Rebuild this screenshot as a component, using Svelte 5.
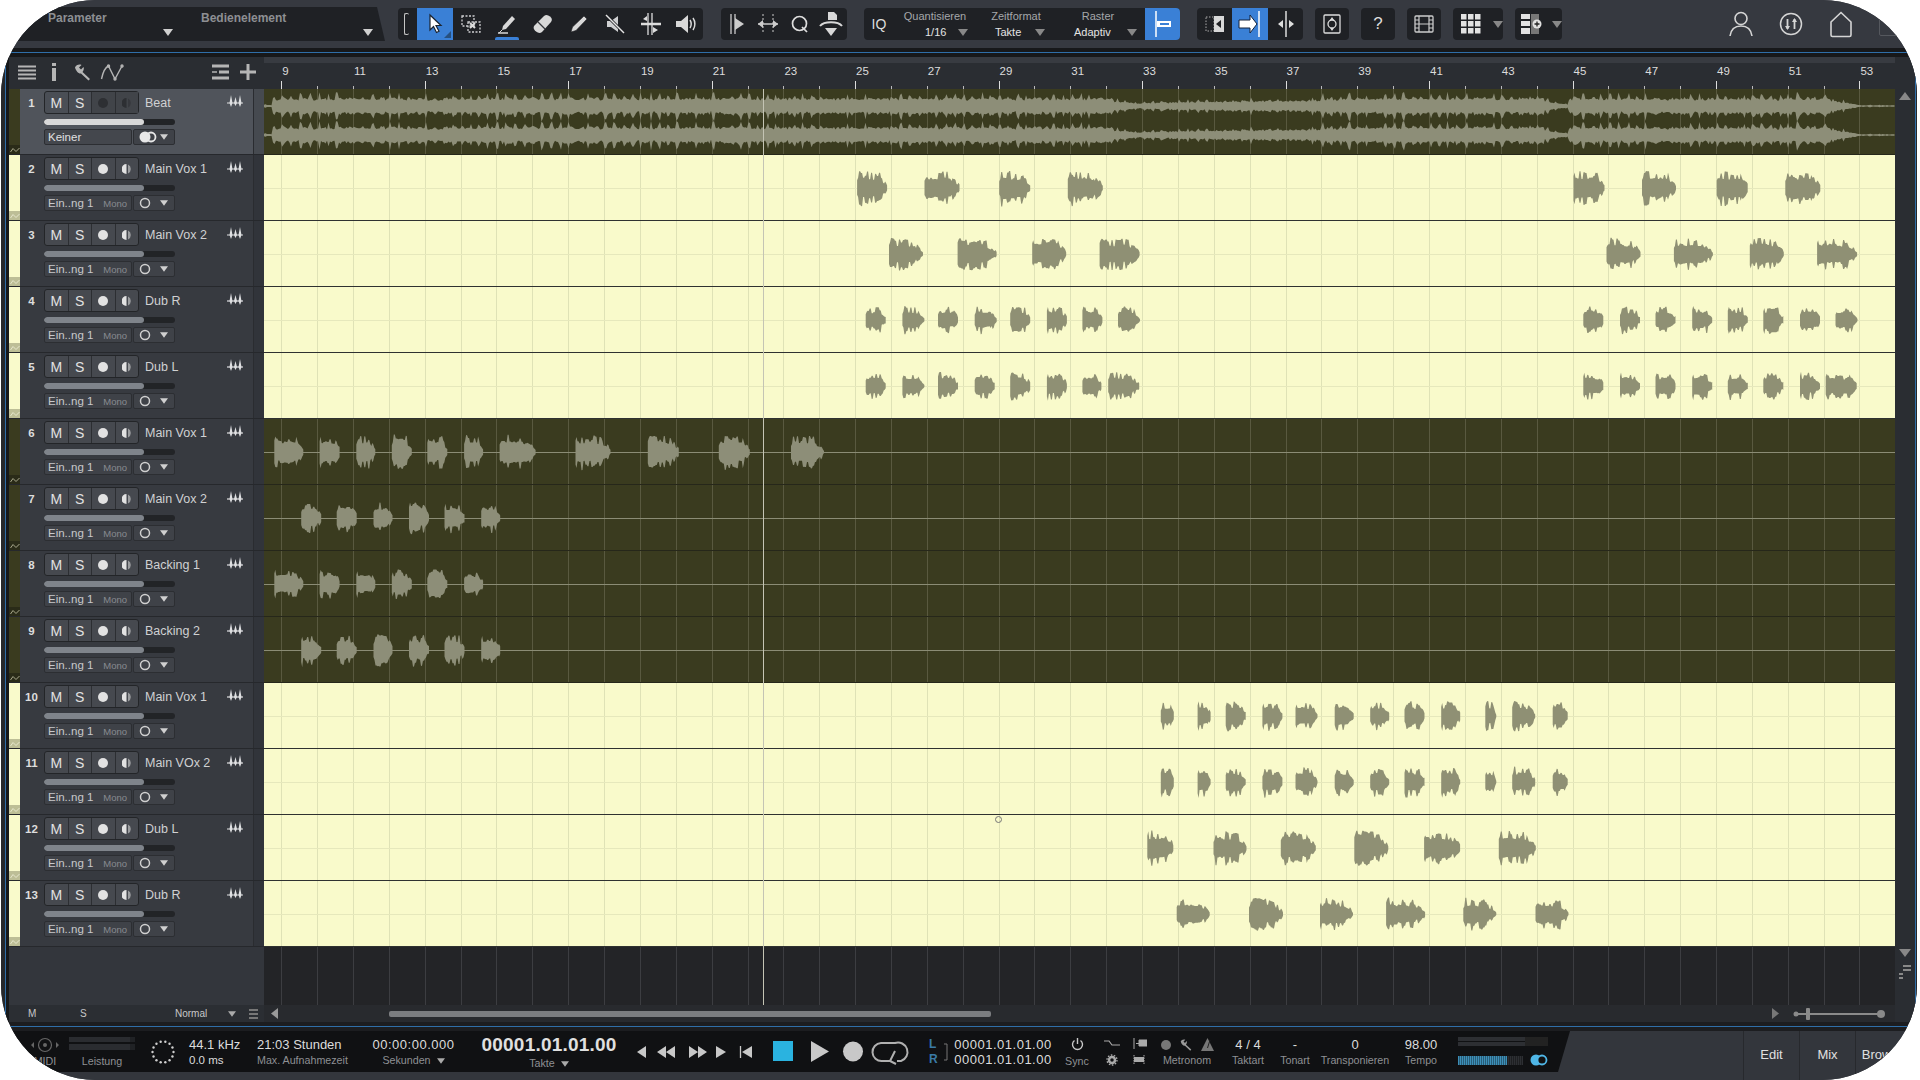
<script>
  // clip positions were measured on the 1568 wide reference
  const K = 1920 / 1568;
  const LANE_X = 264;
  const LANE_W = 1631;

  const barX = (n) => 281.2 + (n - 9) * 35.87;
  const bars = [];
  for (let n = 9; n <= 53; n++) bars.push(n);

  function makeRandom(seed) {
    let s = seed * 9973 + 17;
    return () => {
      s = (s * 16807) % 2147483647;
      return (s % 10000) / 10000;
    };
  }

  // one vocal phrase: fast attack, comb-like body, short tail
  function blob(x0, x1, cy, amp, seed) {
    const r = makeRandom(seed);
    const top = [];
    const bottom = [];
    const len = x1 - x0;
    let upper = 0.7;
    let lower = 0.7;
    for (let x = 0; x <= len; x += 1) {
      const t = x / len;
      let env = 1 - t * 0.15;
      if (t < 0.04) env = 0.7 + t * 7;
      if (t > 0.76) env = 0.62 * Math.pow((1 - t) / 0.24, 0.6) + 0.08;
      if (x % 2 === 0) {
        const tall = r() > 0.5;
        upper = tall ? 0.85 + r() * 0.35 : 0.58 + r() * 0.2;
        lower = tall ? 0.85 + r() * 0.4 : 0.58 + r() * 0.2;
      }
      top.push([x0 + x, cy - amp * env * upper]);
      bottom.push([x0 + x, cy + amp * env * lower]);
    }
    return [...top, ...bottom.reverse()]
      .map((p) => p[0].toFixed(1) + "," + p[1].toFixed(1))
      .join(" ");
  }

  // the Beat track, a long stereo file
  function beatWave(cy, seed) {
    const r = makeRandom(seed);
    const top = [];
    const bottom = [];
    for (let x = 0; x < LANE_W; x += 1.5) {
      const abs = x + LANE_X;
      const bar = 9 + (abs - 281.2) / 35.87;
      let env = 1;
      if (abs < 273) env = 0.14;
      if (bar > 32.2 && bar < 33) env = 0.65 - (bar - 32.2) * 0.4;
      if (bar >= 33 && bar < 37) env = 0.42 + (bar - 33) * 0.08;
      if (bar >= 37 && bar < 38) env = 0.8;
      if (bar > 44.2 && bar < 44.9) env = 0.7 - (bar - 44.2) * 0.8;
      if (bar > 52) env = Math.max(0.1, 1 - (bar - 52) * 0.9);
      const beat = (bar * 4) % 1;
      const pulse = beat < 0.3 ? 1 : 0.2 + (1 - beat) * 0.3;
      const a = env * (5 + pulse * r() * 8 + r() * 1.5);
      top.push([x, cy - a]);
      bottom.push([x, cy + a * (0.9 + r() * 0.25)]);
    }
    return [...top, ...bottom.reverse()]
      .map((p) => p[0].toFixed(1) + "," + p[1].toFixed(1))
      .join(" ");
  }

  const dubA = [[707, 724], [737, 755], [766, 783], [796, 814], [825, 842], [855, 872], [884, 901], [913, 931], [1293, 1310], [1323, 1340], [1352, 1369], [1382, 1399], [1411, 1428], [1440, 1457], [1470, 1487], [1499, 1517]];
  const dubB = [[707, 724], [737, 755], [766, 783], [796, 813], [825, 842], [855, 872], [884, 900], [905, 931], [1293, 1310], [1323, 1340], [1352, 1369], [1382, 1399], [1411, 1428], [1440, 1457], [1470, 1487], [1491, 1517]];
  const backA = [[246, 263], [275, 292], [305, 321], [334, 351], [363, 380], [393, 409]];
  const backB = [[224, 248], [261, 278], [291, 307], [320, 337], [349, 366], [379, 395]];
  const late = [[948, 959], [978, 989], [1001, 1018], [1031, 1048], [1058, 1076], [1090, 1106], [1119, 1135], [1147, 1164], [1177, 1193], [1213, 1222], [1235, 1254], [1268, 1281]];

  const tracks = [
    { name: "Beat", dark: true, clips: [], amp: 0 },
    { name: "Main Vox 1", clips: [[700, 725], [755, 784], [816, 842], [872, 901], [1285, 1311], [1341, 1369], [1402, 1428], [1458, 1487]], amp: 15 },
    { name: "Main Vox 2", clips: [[726, 754], [782, 814], [843, 871], [898, 931], [1312, 1340], [1367, 1399], [1429, 1457], [1484, 1517]], amp: 14 },
    { name: "Dub R", clips: dubA, amp: 12 },
    { name: "Dub L", clips: dubB, amp: 12 },
    { name: "Main Vox 1", dark: true, clips: [[224, 248], [261, 278], [291, 307], [320, 337], [349, 366], [379, 395], [408, 438], [470, 499], [529, 555], [587, 613], [646, 673]], amp: 15 },
    { name: "Main Vox 2", dark: true, clips: backA, amp: 14 },
    { name: "Backing 1", dark: true, clips: backB, amp: 13 },
    { name: "Backing 2", dark: true, clips: backA, amp: 14 },
    { name: "Main Vox 1", clips: late, amp: 13 },
    { name: "Main VOx 2", clips: late, amp: 13 },
    { name: "Dub L", clips: [[937, 959], [991, 1018], [1046, 1075], [1106, 1134], [1163, 1193], [1224, 1255]], amp: 15 },
    { name: "Dub R", clips: [[961, 988], [1020, 1048], [1078, 1105], [1132, 1164], [1195, 1222], [1254, 1281]], amp: 14 }
  ];

  tracks.forEach((t, i) => {
    t.shapes = t.clips.map((c, j) =>
      blob(c[0] * K - LANE_X, c[1] * K - LANE_X, 33, t.amp, (i + 1) * 31 + j * 7 + 3)
    );
  });
  const beatTop = beatWave(17, 11);
  const beatBottom = beatWave(46, 11);

  const spinnerDots = [];
  for (let i = 0; i < 14; i++) {
    const a = (i / 14) * Math.PI * 2;
    spinnerDots.push({ x: 13 + Math.cos(a) * 10.5, y: 13 + Math.sin(a) * 10.5 });
  }
</script>

{#snippet tri(cls = "")}
  <svg class="tri {cls}" width="10" height="7" viewBox="0 0 10 7"><path d="M0 0H10L5 7Z" /></svg>
{/snippet}

{#snippet waves()}
  <svg class="waves" width="18" height="14" viewBox="0 0 18 14">
    <path d="M1 9h16" stroke="#dfe0e2" stroke-width="1.200" fill="none" />
    <path d="M5 1 6.500 9 5 13 3.500 9ZM9.500 3 11 9 9.500 12 8 9ZM14 1 15.500 9 14 13 12.500 9Z" fill="#dfe0e2" />
  </svg>
{/snippet}

{#snippet autoIcon()}
  <svg width="10" height="6" viewBox="0 0 10 6"><path d="M.5 5 3 1.5 6 4.5 9.500 1" stroke="currentColor" fill="none" /></svg>
{/snippet}

<div class="window">
  <header class="topbar">
    <div class="params">
      <div class="param first">Parameter {@render tri()}</div>
      <div class="param second">Bedienelement {@render tri()}</div>
    </div>

    <div class="grp g1">
      <span class="bracket"></span>
      <div class="slot s36 active">
        <svg width="20" height="22" viewBox="0 0 20 22"><path d="M5 2v15l3.500-3.500 3 6 2.500-1.200-3-5.800h5Z" fill="#fff" stroke="#1c2430" stroke-width="1.200" /></svg>
        <i class="corner"></i>
      </div>
      <div class="slot s36">
        <svg width="22" height="20" viewBox="0 0 22 20" fill="none" stroke="#cfd0d2" stroke-width="1.300" stroke-dasharray="2 1.500"><path d="M2 2h12v10H2ZM8 8h12v10H8Z" /><path d="M10 9l5 5M15 9l-5 5" stroke="#ddd" stroke-width="2" stroke-dasharray="none" /></svg>
      </div>
      <div class="slot s36 under">
        <svg width="22" height="22" viewBox="0 0 22 22"><path d="M7 13 16 3l3 3-9 10-4 1Z" fill="#d8d8d8" /><path d="M2 20h10" stroke="#d8d8d8" stroke-width="1.300" /><path d="M6 17 3 20" stroke="#d8d8d8" /></svg>
      </div>
      <div class="slot s36">
        <svg width="22" height="22" viewBox="0 0 22 22"><path d="M2 13 12 3c2-1.500 4-1 6 .5s2.500 3.500 1 5.500L10 19c-2 1.500-4 1-6-.5S1 15 2 13Z" fill="#d8d8d8" /><path d="M6 9l7 7" stroke="#33353a" stroke-width="1.300" /></svg>
      </div>
      <div class="slot s36">
        <svg width="22" height="22" viewBox="0 0 22 22"><path d="M3 19 4.500 14 16 3l3 3L8 17.500Z" fill="#d8d8d8" stroke="#1e1f22" stroke-width=".6" /></svg>
      </div>
      <div class="slot s36">
        <svg width="22" height="22" viewBox="0 0 22 22"><path d="M3 8h4l7-5v16l-7-5H3Z" fill="#cfd0d2" /><path d="M2 2l18 18" stroke="#1e1f22" stroke-width="3" /><path d="M2 2l18 18" stroke="#e5e5e5" stroke-width="1.500" /></svg>
      </div>
      <div class="slot s36">
        <svg width="22" height="24" viewBox="0 0 22 24"><path d="M8 1v22M12 1v22" stroke="#ddd" stroke-width="1.300" /><path d="M1 12h20" stroke="#ddd" stroke-width="2.500" /><path d="M7 4 3 7l4 2ZM13 15v6l5-3Z" fill="#ddd" /></svg>
      </div>
      <div class="slot s34">
        <svg width="22" height="22" viewBox="0 0 22 22"><path d="M1 8h5l7-6v18l-7-6H1Z" fill="#d8d8d8" /><path d="M15 7c1.500 2.500 1.500 5.500 0 8M18 5c2.500 3.500 2.500 8.500 0 12" stroke="#d8d8d8" stroke-width="1.500" fill="none" /></svg>
      </div>
    </div>

    <div class="grp g2">
      <div class="slot">
        <svg width="20" height="22" viewBox="0 0 20 22"><path d="M4 1v20" stroke="#ccc" stroke-width="1.300" /><path d="M8 1v20" stroke="#ccc" stroke-width="1.300" /><path d="M8 5l9 6-9 6Z" fill="#ccc" /></svg>
      </div>
      <div class="slot">
        <svg width="22" height="22" viewBox="0 0 22 22"><path d="M6 1v20M16 1v20" stroke="#ccc" stroke-dasharray="2 2" /><path d="M1 11h20" stroke="#ccc" stroke-width="1.500" /><path d="M6 7 1 11l5 4ZM16 7l5 4-5 4Z" fill="#ccc" /></svg>
      </div>
      <div class="slot">
        <svg width="20" height="20" viewBox="0 0 20 20"><circle cx="9.500" cy="9.500" r="7" fill="none" stroke="#ddd" stroke-width="1.700" /><path d="M12 13l5 5" stroke="#ddd" stroke-width="1.700" /></svg>
      </div>
      <div class="slot">
        <svg width="24" height="26" viewBox="0 0 24 26"><path d="M9 1h6l3 3v5H9Z" fill="#d8d8d8" /><path d="M1 15c4-5 18-5 22 0" stroke="#d8d8d8" stroke-width="2" fill="none" /><path d="M6 17h12l-6 8Z" fill="#d8d8d8" /></svg>
      </div>
    </div>

    <div class="grp g3">
      <div class="iq">IQ</div>
      <div class="field q"><span class="label">Quantisieren</span><span class="value">1/16 {@render tri()}</span></div>
      <div class="field z"><span class="label">Zeitformat</span><span class="value">Takte {@render tri()}</span></div>
      <div class="field r"><span class="label">Raster</span><span class="value">Adaptiv {@render tri()}</span></div>
      <div class="slot snap">
        <svg width="22" height="28" viewBox="0 0 22 28"><path d="M4 1v26" stroke="#fff" stroke-width="1.500" /><rect x="5" y="11" width="14" height="6" fill="#fff" /><rect x="8" y="13" width="9" height="2" fill="#3a80d6" /></svg>
      </div>
    </div>

    <div class="grp g4">
      <div class="slot w35">
        <svg width="20" height="18" viewBox="0 0 20 18"><path d="M1 2h8v14H1Z" fill="none" stroke="#aaa" stroke-dasharray="1.500 1.500" /><rect x="9" y="1" width="10" height="16" fill="#d8d8d8" /><path d="M16 5l-5 4 5 4Z" fill="#1f2023" /></svg>
      </div>
      <div class="slot w36 active">
        <svg width="24" height="28" viewBox="0 0 24 28"><path d="M1 10h11V5l7 9-7 9v-5H1Z" fill="#fff" stroke="#15233a" /><path d="M21 1v26" stroke="#fff" stroke-width="1.500" /></svg>
      </div>
      <div class="slot w35">
        <svg width="22" height="28" viewBox="0 0 22 28"><path d="M11 1v26" stroke="#ddd" stroke-width="1.500" /><path d="M8 10l-5 4 5 4ZM14 10l5 4-5 4Z" fill="#ddd" /></svg>
      </div>
    </div>

    <div class="grp box">
      <svg width="18" height="20" viewBox="0 0 18 20"><rect x="1" y="1" width="16" height="18" rx="1" fill="none" stroke="#ddd" stroke-width="1.300" /><circle cx="9" cy="10" r="4" fill="none" stroke="#ddd" stroke-width="1.300" /><path d="M7 6l2-3 2 3ZM7 14l2 3 2-3Z" fill="#ddd" /></svg>
    </div>
    <div class="grp box qm">?</div>
    <div class="grp box">
      <svg width="20" height="18" viewBox="0 0 20 18"><rect x="1" y="1" width="18" height="16" rx="1" fill="none" stroke="#ccc" stroke-width="1.300" /><path d="M5 1v16M15 1v16M5 9h10M1 5h4M1 9h4M1 13h4M15 5h4M15 9h4M15 13h4" stroke="#ccc" stroke-width="1.200" /></svg>
    </div>
    <div class="grp box wide g8">
      <svg width="20" height="20" viewBox="0 0 20 20" fill="#e2e2e2"><rect x="0" y="0" width="5.500" height="5.500" /><rect x="7" y="0" width="5.500" height="5.500" /><rect x="14" y="0" width="5.500" height="5.500" /><rect x="0" y="7" width="5.500" height="5.500" /><rect x="7" y="7" width="5.500" height="5.500" /><rect x="14" y="7" width="5.500" height="5.500" /><rect x="0" y="14" width="5.500" height="5.500" /><rect x="7" y="14" width="5.500" height="5.500" /><rect x="14" y="14" width="5.500" height="5.500" /></svg>
      {@render tri()}
    </div>
    <div class="grp box wide g9">
      <svg width="22" height="22" viewBox="0 0 22 22"><path d="M0 1h9v5H0ZM0 8h9v5H0ZM0 15h9v6H0Z" fill="#e2e2e2" /><rect x="10" y="1" width="8" height="20" fill="#777" /><circle cx="16" cy="11" r="4.500" fill="#e2e2e2" /><path d="M13.500 11h5M16 8.500v5" stroke="#222" stroke-width="1.300" /></svg>
      {@render tri()}
    </div>

    <div class="account">
      <svg width="24" height="26" viewBox="0 0 24 26" fill="none" stroke="#d5d5d5" stroke-width="1.600"><circle cx="12" cy="7.500" r="6" /><path d="M1 25c1-7 5-10 11-10s10 3 11 10" /></svg>
      <svg width="24" height="24" viewBox="0 0 24 24" fill="none" stroke="#d5d5d5" stroke-width="1.500"><circle cx="12" cy="12" r="10.500" /><path d="M8.500 7v10M15.500 7v10" stroke-width="1.800" /><path d="M6 14l2.500 4 2.500-4ZM13 10l2.500-4 2.500 4Z" fill="#d5d5d5" stroke="none" /></svg>
      <svg width="24" height="27" viewBox="0 0 24 27" fill="none" stroke="#d5d5d5" stroke-width="1.600"><path d="M2 11 12 1.500 22 11v13a1.500 1.500 0 0 1-1.500 1.500h-17A1.500 1.500 0 0 1 2 24Z" /></svg>
      <span class="clipped"></span>
    </div>
  </header>

  <div class="rule"></div>

  <div class="main">
    <aside class="heads">
      <div class="heads-top">
        <svg class="ic-list" width="18" height="15" viewBox="0 0 18 15"><path d="M0 1.500h18M0 5.500h18M0 9.500h18M0 13.500h18" stroke="#b5b5b5" stroke-width="2" /></svg>
        <svg class="ic-i" width="6" height="18" viewBox="0 0 6 18"><path d="M1 0h4v3H1ZM1 5h4v13H1Z" fill="#b5b5b5" /></svg>
        <svg class="ic-wrench" width="17" height="17" viewBox="0 0 17 17"><path d="M1 3.500C2 1 5 0 7.500 1L5 3.500 7 5.500l2.500-2.500c1 2-.5 4.500-1 5l7.500 7-1.500 1.500L7 9.500C4.500 10 2 7 1 3.500Z" fill="#b5b5b5" /></svg>
        <svg class="ic-auto" width="24" height="17" viewBox="0 0 24 17" fill="none" stroke="#b5b5b5" stroke-width="1.400"><path d="M1.500 15C3 8 6 3 8.500 2l6.500 13L22 2" /><circle cx="8.500" cy="2" r="1" /><circle cx="15" cy="15" r="1" /><circle cx="22" cy="2" r="1" /></svg>
        <svg class="ic-layout" width="17" height="16" viewBox="0 0 17 16"><path d="M0 2h17M7 8h10M0 14h17" stroke="#b5b5b5" stroke-width="3" /><path d="M0 8h5" stroke="#b5b5b5" stroke-width="1.500" /></svg>
        <svg class="ic-plus" width="16" height="16" viewBox="0 0 16 16"><path d="M8 0v16M0 8h16" stroke="#b5b5b5" stroke-width="3" /></svg>
      </div>

      {#each tracks as t, i}
        <div class="head" class:selected={i === 0}>
          <div class="strip" class:olive={t.dark}>
            <span class="auto">{@render autoIcon()}</span>
          </div>
          <div class="body">
            <span class="num">{i + 1}</span>
            <div class="btns">
              <span>M</span>
              <span>S</span>
              <span><i class="dot"></i></span>
              <span>
                <svg width="10" height="10" viewBox="0 0 10 10"><path d="M4.500 0a5 5 0 0 0 0 10Z" fill="currentColor" /><path d="M6 .5a5 5 0 0 1 0 9Z" fill="currentColor" opacity=".55" /></svg>
              </span>
            </div>
            <span class="name">{t.name}</span>
            {@render waves()}
            <div class="fader"><i></i></div>
            <div class="input">
              <span>{i === 0 ? "Keiner" : "Ein..ng 1"}</span>
              {#if i > 0}<em>Mono</em>{/if}
            </div>
            <div class="monitor">
              {#if i === 0}
                <svg width="18" height="12" viewBox="0 0 18 12"><circle cx="6" cy="6" r="5.500" fill="#e8e8e8" /><circle cx="12" cy="6" r="4.500" fill="none" stroke="#e8e8e8" stroke-width="1.800" /></svg>
              {:else}
                <svg width="12" height="12" viewBox="0 0 12 12"><circle cx="6" cy="6" r="4.500" fill="none" stroke="#d0d0d0" stroke-width="1.500" /></svg>
              {/if}
              {@render tri("small")}
            </div>
          </div>
          <div class="tail"></div>
        </div>
      {/each}

      <div class="heads-empty"></div>
      <div class="heads-foot">
        <span class="fm">M</span>
        <span class="fs">S</span>
        <span class="fnormal">Normal</span>
        {@render tri("small")}
        <svg class="flist" width="9" height="10" viewBox="0 0 9 10"><path d="M0 1h9M0 5h9M0 9h9" stroke="#777" stroke-width="2" /></svg>
      </div>
    </aside>

    <section class="arrange">
      <div class="ruler">
        {#each bars as n}
          <i class="tick" class:tall={(n - 9) % 4 === 0} style="left: {barX(n) - LANE_X}px"></i>
          {#if n % 2 === 1}
            <span class="barnum" style="left: {barX(n) - LANE_X + 1}px">{n}</span>
          {/if}
        {/each}
      </div>

      <div class="lanes">
        {#each tracks as t, i}
          <svg class="lane" class:dark={t.dark} width={LANE_W} height="66" viewBox="0 0 {LANE_W} 66">
            {#each bars as n}
              <path class="grid" d="M{Math.round(barX(n) - LANE_X) + 0.5} 0V66" />
            {/each}
            <path class="mid" d="M0 33.500H{LANE_W}" />
            {#if i === 0}
              <polygon class="wave" points={beatTop} />
              <polygon class="wave" points={beatBottom} />
            {/if}
            {#each t.shapes as pts}
              <polygon class="wave" points={pts} />
            {/each}
            <path class="sep" d="M0 65.500H{LANE_W}" />
          </svg>
        {/each}
        <svg class="lane-empty" width={LANE_W} height="58" viewBox="0 0 {LANE_W} 58">
          {#each bars as n}
            <path d="M{Math.round(barX(n) - LANE_X) + 0.5} 0V58" stroke="#3c3d41" />
          {/each}
        </svg>
        <i class="playhead"></i>
        <i class="cursor"></i>
      </div>

      <div class="hscroll">
        <svg class="harrow" width="7" height="11" viewBox="0 0 7 11"><path d="M7 0v11L0 5.500Z" fill="#999" /></svg>
        <i class="thumb"></i>
        <svg class="harrow right" width="7" height="11" viewBox="0 0 7 11"><path d="M0 0v11l7-5.500Z" fill="#777" /></svg>
        <svg class="zoomer" width="94" height="12" viewBox="0 0 94 12"><circle cx="3" cy="6" r="2.500" fill="#8a8a8a" /><path d="M3 6h85" stroke="#8a8a8a" stroke-width="2" /><rect x="13" y="0" width="4" height="12" rx="1" fill="#8a8a8a" /><circle cx="88" cy="6" r="4" fill="#8a8a8a" /></svg>
      </div>
    </section>

    <aside class="vscroll">
      <svg width="12" height="8" viewBox="0 0 12 8"><path d="M0 8h12L6 0Z" fill="#888" /></svg>
      <svg width="12" height="8" viewBox="0 0 12 8"><path d="M0 0h12L6 8Z" fill="#888" /></svg>
      <svg class="vlines" width="12" height="14" viewBox="0 0 12 14"><path d="M4 1h8M4 5h8M0 9h4M0 13h4" stroke="#888" stroke-width="2" /></svg>
    </aside>
  </div>

  <div class="rule low"></div>

  <footer class="bottom">
    <div class="transport">
      <div class="cell midi">
        <svg width="30" height="16" viewBox="0 0 30 16"><circle cx="15" cy="8" r="6.500" fill="none" stroke="#666" stroke-width="1.200" /><circle cx="15" cy="8" r="2" fill="#666" /><path d="M4 5v6l-3-3ZM26 5v6l3-3Z" fill="#666" /></svg>
        <small>MIDI</small>
      </div>
      <div class="cell perf">
        <div class="bars"><i></i><i></i></div>
        <small>Leistung</small>
      </div>
      <svg class="spinner" width="26" height="26" viewBox="0 0 26 26">
        {#each spinnerDots as d}
          <circle cx={d.x} cy={d.y} r="1.200" fill="#cfcfcf" />
        {/each}
      </svg>
      <div class="cell khz"><b>44.1 kHz</b><span class="plain">0.0 ms</span></div>
      <div class="cell rec"><b>21:03 Stunden</b><small>Max. Aufnahmezeit</small></div>
      <div class="cell secs"><b>00:00:00.000</b><small>Sekunden {@render tri("small")}</small></div>
      <div class="cell big"><strong>00001.01.01.00</strong><small>Takte {@render tri("small")}</small></div>

      <svg class="tbuttons" width="283" height="41" viewBox="0 0 283 41">
        <g fill="#c8c8c8">
          <path d="M14 15v12L5 21Z" />
          <path d="M34 15v12l-9-6ZM43 15v12l-9-6Z" />
          <path d="M57 15v12l9-6ZM66 15v12l9-6Z" />
          <path d="M84 15v12l10-6Z" />
          <path d="M120 15v12l-10-6Z" />
        </g>
        <path d="M108.500 15v12" stroke="#c8c8c8" stroke-width="1.300" />
        <rect x="141" y="10" width="20" height="20" fill="#2ab3e0" />
        <path d="M179 10v21l18-10.500Z" fill="#c8c8c8" />
        <circle cx="221" cy="20.500" r="10" fill="#c8c8c8" />
        <path d="M258 30h-8a8 8 0 0 1-1-18h14a8 8 0 0 1 6 18h-4M263 20l-5 10 6 3" fill="none" stroke="#b0b0b0" stroke-width="2" />
      </svg>

      <div class="lr"><span>L</span><span>R</span></div>
      <svg class="bracket2" width="4" height="18" viewBox="0 0 4 18"><path d="M0 1h3v16H0" fill="none" stroke="#777" /></svg>
      <div class="cell times"><b>00001.01.01.00</b><b>00001.01.01.00</b></div>
      <div class="cell sync">
        <svg width="13" height="14" viewBox="0 0 13 14" fill="none" stroke="#c8c8c8" stroke-width="1.400"><path d="M6.500 1v6" /><path d="M3.500 3.500a5 5 0 1 0 6 0" /></svg>
        <small>Sync</small>
      </div>
      <div class="mini">
        <svg width="16" height="8" viewBox="0 0 16 8"><path d="M0 2h5l3 4h8" fill="none" stroke="#aaa" stroke-width="1.200" /></svg>
        <svg width="15" height="11" viewBox="0 0 15 11"><path d="M2 0v11" stroke="#aaa" /><path d="M4 5.500h3M7 2h8v6H7Z" fill="#aaa" stroke="#aaa" /></svg>
        <svg width="12" height="12" viewBox="0 0 12 12"><circle cx="6" cy="6" r="3" fill="none" stroke="#aaa" stroke-width="2.500" /><circle cx="6" cy="6" r="5" fill="none" stroke="#aaa" stroke-width="1.300" stroke-dasharray="1.600 1.500" /></svg>
        <svg width="16" height="9" viewBox="0 0 16 9"><path d="M3 0v9M13 0v9" stroke="#aaa" stroke-dasharray="1.500 1" /><rect x="3" y="2" width="10" height="5" fill="#aaa" /></svg>
      </div>
      <div class="cell metro">
        <div class="micons">
          <i></i>
          <svg width="12" height="12" viewBox="0 0 17 17"><path d="M1 3.500C2 1 5 0 7.500 1L5 3.500 7 5.500l2.500-2.500c1 2-.5 4.500-1 5l7.500 7-1.500 1.500L7 9.500C4.500 10 2 7 1 3.500Z" fill="#999" /></svg>
          <svg width="13" height="13" viewBox="0 0 13 13"><path d="M6.500 0 13 13H0Z" fill="#777" /><path d="M6.500 10 9 2" stroke="#222" /></svg>
        </div>
        <small>Metronom</small>
      </div>
      <div class="cell sig"><b>4 / 4</b><small>Taktart</small></div>
      <div class="cell key"><b>-</b><small>Tonart</small></div>
      <div class="cell trans"><b>0</b><small>Transponieren</small></div>
      <div class="cell tempo"><b>98.00</b><small>Tempo</small></div>
      <div class="meters">
        <div class="ml"><i></i><i></i></div>
        <div class="mr">
          <i class="blue"></i>
          <svg width="18" height="12" viewBox="0 0 18 12"><circle cx="6" cy="6" r="5.500" fill="#4fb6e6" /><circle cx="12" cy="6" r="4.500" fill="#111" stroke="#4fb6e6" stroke-width="1.800" /></svg>
        </div>
      </div>
    </div>
    <nav class="tabs">
      <span>Edit</span>
      <span>Mix</span>
      <span>Browse</span>
    </nav>
  </footer>
</div>

<style>
  :global(body) {
    margin: 0;
    background: #fff;
  }

  .window {
    position: relative;
    width: 1916px;
    height: 1080px;
    margin-left: 1px;
    border-radius: 95px;
    overflow: hidden;
    background: #33363c;
    display: flex;
    flex-direction: column;
    font-family: "Liberation Sans", Arial, sans-serif;
    color: #ddd;
  }

  svg {
    display: block;
    flex: none;
  }

  /* top bar */
  .topbar {
    height: 48px;
    display: flex;
    align-items: center;
    background: #363940;
    box-sizing: border-box;
  }

  .params {
    width: 384px;
    height: 34px;
    background: #1f2125;
    clip-path: polygon(0 0, 376px 0, 384px 100%, 0 100%);
    display: flex;
  }

  .param {
    position: relative;
    font-size: 12px;
    font-weight: bold;
    color: #8d8f93;
    padding-top: 4px;
  }

  .param.first { margin-left: 47px; width: 153px; }
  .param.second { width: 184px; }
  .param .tri { position: absolute; top: 22px; }
  .param.first .tri { left: 115px; }
  .param.second .tri { left: 162px; }

  .tri {
    display: inline-block;
  }
  .tri path { fill: #d0d0d0; }
  .value .tri path, .wide .tri path { fill: #888; }
  .tri.small { width: 8px; height: 6px; }
  .tri.small path { fill: #aaa; }

  .grp {
    height: 32px;
    background: #1f2125;
    border-radius: 4px;
    display: flex;
    align-items: center;
    overflow: hidden;
  }

  .g1 { margin-left: 13px; width: 305px; }
  .g2 { margin-left: 18px; width: 126px; }
  .g3 { margin-left: 17px; width: 316px; }
  .g4 { margin-left: 17px; width: 106px; }

  .slot {
    position: relative;
    height: 100%;
    display: flex;
    align-items: center;
    justify-content: center;
    flex: none;
  }
  .g2 .slot { width: 31.5px; }
  .s36 { width: 36px; }
  .s34 { width: 34px; }
  .w35 { width: 35px; }
  .w36 { width: 36px; }
  .active { background: #3a80d6; }

  .bracket {
    width: 5px;
    height: 22px;
    margin-left: 6px;
    margin-right: 8px;
    border: 1.500px solid #c5c5c5;
    border-right: 0;
    border-radius: 2px;
    box-sizing: border-box;
  }

  .corner {
    position: absolute;
    right: 2px;
    bottom: 2px;
    border-left: 7px solid transparent;
    border-bottom: 7px solid #27507f;
  }

  .under::after {
    content: "";
    position: absolute;
    left: 6px;
    bottom: 0;
    width: 24px;
    height: 3px;
    border-radius: 2px 2px 0 0;
    background: #3a80d6;
  }

  .iq {
    width: 30px;
    text-align: center;
    font-size: 14px;
    color: #ddd;
    flex: none;
  }

  .field {
    height: 100%;
    display: flex;
    flex-direction: column;
    font-size: 11px;
    flex: none;
  }
  .field .label {
    height: 16px;
    line-height: 17px;
    color: #a5a7aa;
    text-align: center;
  }
  .field .value {
    display: flex;
    align-items: center;
    height: 16px;
    color: #e4e4e4;
  }
  .q { width: 82px; }
  .q .value { padding-left: 31px; gap: 12px; }
  .z { width: 80px; }
  .z .value { padding-left: 19px; gap: 14px; }
  .r { width: 89px; }
  .r .value { padding-left: 18px; gap: 16px; }
  .r .label { padding-right: 5px; }

  .snap {
    width: 35px;
    background: #3a80d6;
  }

  .box {
    width: 34px;
    margin-left: 12px;
    justify-content: center;
    flex: none;
  }
  .qm {
    font-size: 17px;
    color: #ddd;
  }
  .wide { gap: 12px; justify-content: flex-start; padding-left: 8px; box-sizing: border-box; }
  .g8 { width: 50px; }
  .g9 { width: 47px; padding-left: 6px; gap: 9px; }

  .account {
    margin-left: 167px;
    display: flex;
    align-items: center;
    gap: 26px;
  }
  .clipped {
    width: 22px;
    height: 22px;
    border: 1px solid #55585e;
    border-radius: 2px;
  }

  /* blue hairlines between the sections */
  .rule {
    height: 9px;
    flex: none;
    background: #17181a;
    position: relative;
  }
  .rule::after {
    content: "";
    position: absolute;
    left: 0;
    right: 0;
    top: 4px;
    height: 1px;
    background: #2f6ea8;
  }
  .rule.low {
    background: #1c1d20;
  }

  /* main area */
  .main {
    height: 965px;
    flex: none;
    display: flex;
    padding-left: 4px;
    background: #26282c;
  }

  .heads {
    width: 255px;
    flex: none;
    box-sizing: content-box;
    border-left: 1px solid #2f6ea8;
    padding-left: 3px;
    background: #17181a;
    display: flex;
    flex-direction: column;
  }

  .heads-top {
    height: 32px;
    flex: none;
    background: #2a2d32;
    position: relative;
    display: flex;
    align-items: center;
    padding-bottom: 2px;
    box-sizing: border-box;
  }
  .ic-list { margin-left: 9px; }
  .ic-i { margin-left: 15px; }
  .ic-wrench { margin-left: 17px; }
  .ic-auto { margin-left: 9px; }
  .ic-layout { margin-left: 88px; }
  .ic-plus { margin-left: 11px; }

  .head {
    height: 66px;
    flex: none;
    display: flex;
    background: #373a40;
    box-sizing: border-box;
    border-bottom: 1px solid #26282c;
  }
  .head.selected {
    background: #50545b;
  }

  .strip {
    width: 11px;
    flex: none;
    background: #f9facb;
    display: flex;
    flex-direction: column;
    justify-content: flex-end;
  }
  .strip.olive {
    background: #3a3b1f;
  }
  .auto {
    height: 9px;
    display: flex;
    align-items: center;
    justify-content: center;
    background: #bdbe96;
    color: #e6e6cc;
  }
  .olive .auto {
    background: #2a2b18;
    color: #a8a88c;
  }

  .body {
    width: 233px;
    position: relative;
    flex: none;
    display: grid;
    grid-template-columns: 24px 95px 91px 18px;
    grid-template-rows: 25px 13px 18px;
    padding-top: 2px;
    box-sizing: border-box;
  }

  .tail {
    width: 11px;
    flex: none;
    background: #31343a;
    border-left: 1px solid #2a2c30;
    box-sizing: border-box;
  }
  .selected .tail {
    background: #464a50;
  }

  .num {
    font-size: 11.500px;
    font-weight: bold;
    text-align: center;
    color: #ddd;
    padding-top: 6px;
    padding-right: 1px;
  }

  .btns {
    height: 23px;
    display: flex;
    background: #46494f;
    border: 1px solid #232528;
    border-radius: 3px;
    box-sizing: border-box;
    width: 95px;
  }
  .btns span {
    flex: 1;
    display: flex;
    align-items: center;
    justify-content: center;
    font-size: 14px;
    color: #e2e2e2;
    border-left: 1px solid #2c2e32;
  }
  .btns span:first-child { border-left: 0; }
  .dot {
    width: 10px;
    height: 10px;
    border-radius: 50%;
    background: currentColor;
  }
  .selected .btns { background: #4a4e55; }
  .selected .btns span:nth-child(n + 3) {
    background: #414449;
    color: #2d2f33;
  }

  .name {
    padding-left: 6px;
    font-size: 12.500px;
    line-height: 25px;
    color: #d0d1d3;
    white-space: nowrap;
  }

  .waves {
    margin-top: 3px;
    margin-left: -4px;
  }

  .fader {
    grid-column: 2 / 4;
    width: 131px;
    height: 6px;
    margin-top: 3px;
    border-radius: 3px;
    background: #222427;
    overflow: hidden;
  }
  .fader i {
    display: block;
    width: 100px;
    height: 100%;
    border-radius: 3px;
    background: #7f848b;
  }
  .selected .fader i {
    background: #d8d8d8;
  }

  .input {
    grid-column: 2;
    grid-row: 3;
    width: 88px;
    height: 16px;
    display: flex;
    justify-content: space-between;
    align-items: center;
    padding: 0 4px 0 3px;
    box-sizing: border-box;
    background: #3f4248;
    border: 1px solid #2c2e32;
    border-radius: 2px;
    font-size: 11.500px;
    color: #c8c9cb;
  }
  .input em {
    font-style: normal;
    font-size: 9.500px;
    color: #888b90;
  }
  .selected .input {
    background: #44474d;
    color: #e0e0e0;
  }

  .monitor {
    grid-column: 3;
    grid-row: 3;
    width: 42px;
    height: 16px;
    margin-left: -6px;
    display: flex;
    align-items: center;
    justify-content: space-between;
    padding: 0 6px 0 5px;
    box-sizing: border-box;
    background: #3f4248;
    border: 1px solid #2c2e32;
    border-radius: 2px;
  }
  .monitor .tri path {
    fill: #d0d0d0;
  }

  .heads-empty {
    height: 58px;
    flex: none;
    background: #33363c;
  }

  .heads-foot {
    height: 17px;
    flex: none;
    display: flex;
    align-items: center;
    background: #2b2e33;
    font-size: 10px;
    color: #c8c8c8;
  }
  .fm { margin-left: 19px; width: 52px; }
  .fs { width: 95px; }
  .fnormal { width: 53px; }
  .flist { margin-left: 13px; }

  .arrange {
    width: 1631px;
    flex: none;
    display: flex;
    flex-direction: column;
    background: #232427;
  }

  .ruler {
    position: relative;
    height: 32px;
    flex: none;
    box-sizing: border-box;
    border-top: 6px solid #383b41;
    background: #2a2d32;
  }
  .tick {
    position: absolute;
    bottom: 0;
    width: 1px;
    height: 3px;
    background: #bbb;
  }
  .tick.tall {
    height: 8px;
    background: #ddd;
  }
  .barnum {
    position: absolute;
    top: 2px;
    font-size: 11.500px;
    color: #dcdcdc;
  }

  .lanes {
    position: relative;
    height: 916px;
    flex: none;
  }
  .lane {
    background: #f9facb;
  }
  .lane .grid {
    stroke: #dfe2b6;
    stroke-width: 1;
  }
  .lane .mid {
    stroke: #e6e8bc;
    stroke-width: 1;
  }
  .lane .wave {
    fill: #8f9074;
  }
  .lane .sep {
    stroke: #2f3130;
    stroke-width: 1;
  }
  .lane.dark {
    background: #3a3b1f;
  }
  .lane.dark .grid {
    stroke: #59593f;
  }
  .lane.dark .mid {
    stroke: #8b8c75;
  }
  .lane.dark .wave {
    fill: #8d8e78;
  }
  .lane.dark .sep {
    stroke: #26271a;
  }
  /* the Beat lane has two channels, no center line */
  .lane:first-child .mid {
    stroke: none;
  }

  .playhead {
    position: absolute;
    left: 499px;
    top: 0;
    bottom: 0;
    width: 1px;
    background: #c4c4b4;
  }
  .cursor {
    position: absolute;
    left: 731px;
    top: 727px;
    width: 7px;
    height: 7px;
    box-sizing: border-box;
    border: 1px solid #777;
    border-radius: 50%;
  }

  .hscroll {
    height: 17px;
    flex: none;
    position: relative;
    display: flex;
    align-items: center;
    background: #282a2e;
  }
  .harrow { margin-left: 7px; }
  .thumb {
    width: 602px;
    height: 6px;
    margin-left: 111px;
    border-radius: 2px;
    background: #7b7d80;
  }
  .harrow.right { margin-left: 781px; }
  .zoomer { margin-left: 14px; }

  .vscroll {
    width: 21px;
    flex: none;
    display: flex;
    flex-direction: column;
    align-items: center;
    background: #2a2d32;
    padding-top: 35px;
    box-sizing: border-box;
    border-right: 1px solid #2f6ea8;
  }
  .vscroll svg:nth-child(2) { margin-top: 849px; }
  .vlines { margin-top: 8px; }

  /* transport */
  .bottom {
    flex: 1;
    display: flex;
    background: #33363c;
    align-items: flex-start;
  }

  .transport {
    width: 1569px;
    height: 41px;
    flex: none;
    display: flex;
    align-items: center;
    background: #101113;
    clip-path: polygon(0 0, 100% 0, 1557px 100%, 0 100%);
  }

  .cell {
    flex: none;
    height: 41px;
    box-sizing: border-box;
    padding-top: 1px;
    display: flex;
    flex-direction: column;
    align-items: center;
    justify-content: center;
    gap: 2px;
  }
  .cell b {
    font-weight: normal;
    font-size: 13px;
    line-height: 15px;
    color: #dcdcdc;
    white-space: nowrap;
  }
  .cell small {
    display: flex;
    align-items: center;
    gap: 6px;
    font-size: 10.700px;
    line-height: 13px;
    color: #8e9093;
    white-space: nowrap;
  }
  .cell .plain {
    font-size: 11.500px;
    line-height: 13px;
    color: #dcdcdc;
  }

  .midi { width: 40px; margin-left: 24px; }
  .perf { width: 66px; margin-left: 4px; }
  .bars {
    width: 66px;
    height: 13px;
    display: flex;
    flex-direction: column;
    gap: 2px;
    margin-bottom: 3px;
  }
  .bars i {
    flex: 1;
    background: linear-gradient(90deg, #2a2c30 92%, #202225 92%);
  }
  .spinner { margin-left: 15px; }
  .khz { width: 68px; margin-left: 13px; align-items: flex-start; }
  .rec { width: 116px; align-items: flex-start; }
  .secs { width: 81px; }
  .secs b { letter-spacing: .5px; }
  .big { width: 136px; margin-left: 27px; gap: 1px; }
  .big strong {
    font-size: 19px;
    line-height: 22px;
    letter-spacing: .2px;
    color: #e0e0e0;
    white-space: nowrap;
  }
  .tbuttons { margin-left: 15px; }
  .lr {
    width: 12px;
    margin-left: 14px;
    display: flex;
    flex-direction: column;
    gap: 2px;
    font-size: 12px;
    font-weight: bold;
    color: #3a7aa6;
    line-height: 13px;
  }
  .bracket2 { margin-left: 3px; }
  .times { width: 100px; margin-left: 5px; gap: 0; }
  .times b { letter-spacing: .5px; }
  .sync { width: 30px; margin-left: 9px; gap: 4px; }
  .mini {
    width: 50px;
    margin-left: 8px;
    display: grid;
    grid-template-columns: 24px 24px;
    gap: 5px 3px;
    justify-items: center;
    align-items: center;
  }
  .metro { width: 64px; margin-left: 5px; }
  .micons {
    display: flex;
    align-items: center;
    gap: 9px;
    height: 15px;
  }
  .micons i {
    width: 10px;
    height: 10px;
    border-radius: 50%;
    background: #777;
  }
  .sig { width: 46px; margin-left: 6px; }
  .key { width: 46px; margin-left: 1px; }
  .trans { width: 70px; margin-left: 2px; }
  .tempo { width: 52px; margin-left: 5px; }

  .meters {
    width: 90px;
    margin-left: 11px;
    display: flex;
    flex-direction: column;
    gap: 8px;
  }
  .ml {
    height: 9px;
    display: flex;
    flex-direction: column;
    gap: 1px;
    background: linear-gradient(90deg, transparent 74%, #222 74%);
  }
  .ml i {
    flex: 1;
    background: linear-gradient(90deg, #2d2f33 74%, transparent 74%);
  }
  .mr {
    display: flex;
    align-items: center;
    gap: 7px;
  }
  .mr .blue {
    width: 66px;
    height: 9px;
    background:
      repeating-linear-gradient(90deg, transparent 0 1px, rgba(0, 0, 0, .35) 1px 2px),
      linear-gradient(90deg, #3d8fb8 75%, #e8e8e8 75% 76%, #2d2f33 76%);
  }

  .tabs {
    margin-left: 173px;
    height: 49px;
    display: flex;
  }
  .tabs span {
    width: 56px;
    box-sizing: border-box;
    border-left: 1px solid #27292d;
    text-align: center;
    font-size: 13px;
    line-height: 48px;
    color: #e0e0e0;
    white-space: nowrap;
  }
</style>
